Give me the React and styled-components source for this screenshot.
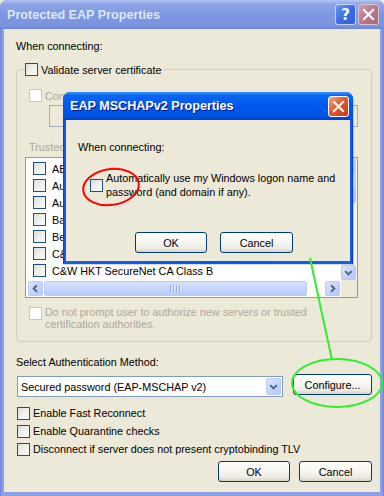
import React from 'react';
import styled, { createGlobalStyle } from 'styled-components';

const GlobalStyle = createGlobalStyle`
  html, body { margin: 0; padding: 0; background: #ece9d8; }
  body { font-family: "Liberation Sans", Arial, sans-serif; font-size: 10.8px; color: #000; }
`;

const Desktop = styled.div`
  position: relative;
  width: 384px;
  height: 496px;
  overflow: hidden;
`;

const Window = styled.div`
  box-sizing: border-box;
  display: flex;
  flex-direction: column;
  width: ${p => p.w}px;
  height: ${p => p.h}px;
  border-radius: 7px 7px 0 0;
  background: ${p => p.active ? 'linear-gradient(90deg, #0831d9, #1660ef 2px, #0058ee 50%, #1660ef calc(100% - 2px), #0831d9)' : 'linear-gradient(90deg, #6b7fd3, #8c9fe4 2px, #8c9fe4 calc(100% - 2px), #6b7fd3)'};
  ${p => p.floating && `
    position: absolute;
    left: ${p.x}px;
    top: ${p.y}px;
    z-index: 5;
    box-shadow: 1px 1px 0 rgba(0,0,0,0.15);
  `}
`;

const TitleBar = styled.div`
  flex: none;
  display: flex;
  align-items: center;
  height: ${p => p.h}px;
  padding: 0 ${p => p.pr}px 0 7px;
  border-radius: 7px 7px 0 0;
  background: ${p => p.active
    ? 'linear-gradient(180deg, #3d95ff 0%, #0a66f2 12%, #0058ee 45%, #0054e3 85%, #0042c9 100%)'
    : 'linear-gradient(180deg, #b4c6f4 0%, #8ea5e8 14%, #7d97e2 50%, #7b94df 90%, #6b83d4 100%)'};
`;

const TitleText = styled.span`
  flex: 1;
  font-family: "Liberation Sans", Arial, sans-serif;
  font-weight: bold;
  font-size: 12.6px;
  color: ${p => p.active ? '#ffffff' : '#dde7fa'};
  text-shadow: ${p => p.active ? '1px 1px 0 #0a1883' : 'none'};
  white-space: nowrap;
`;

const Caps = styled.div`
  display: flex;
  gap: 2px;
`;

const CapButton = styled.div`
  box-sizing: border-box;
  width: 21px;
  height: 21px;
  border-radius: 3px;
  border: 1px solid ${p => p.kind === 'help' ? '#c6d4f7' : p.active ? '#ffffff' : '#d9c3d1'};
  display: flex;
  align-items: center;
  justify-content: center;
  color: #fff;
  font-weight: bold;
  font-size: 15px;
  font-family: "DejaVu Sans", sans-serif;
  background: ${p => p.kind === 'help'
    ? 'linear-gradient(135deg, #6e97f2, #3b6ee6 50%, #2f5fd6)'
    : p.active
      ? 'linear-gradient(135deg, #f3a58b, #e15a32 45%, #c7381a)'
      : 'linear-gradient(135deg, #d09cae, #b9788d 50%, #a86679)'};
`;

const Body = styled.div`
  flex: 1;
  display: flex;
  flex-direction: column;
  margin: 0 ${p => p.br}px ${p => p.bb}px ${p => p.bl}px;
  padding: ${p => p.pad};
  background: #ece9d8;
`;

const Caption = styled.div`
  line-height: 13px;
  height: 13px;
  white-space: nowrap;
  color: ${p => p.disabled ? '#aca899' : '#000'};
  margin-top: ${p => p.mt || 0}px;
`;

const CheckRow = styled.div`
  display: flex;
  align-items: center;
  gap: 3px;
  height: ${p => p.h || 13}px;
  margin-top: ${p => p.mt || 0}px;
  margin-left: ${p => p.ml || 0}px;
  white-space: nowrap;
  color: ${p => p.disabled ? '#aca899' : '#000'};
`;

const WrapRow = styled.div`
  display: flex;
  align-items: flex-start;
  gap: 3px;
  margin-top: ${p => p.mt || 0}px;
  margin-left: ${p => p.ml || 0}px;
  color: ${p => p.disabled ? '#aca899' : '#000'};
  & > span:last-child {
    line-height: ${p => p.lh}px;
    white-space: nowrap;
  }
`;

const Box = styled.span`
  box-sizing: border-box;
  flex: none;
  width: 13px;
  height: 13px;
  margin-top: ${p => p.mt || 0}px;
  border: 1px solid ${p => p.disabled ? '#cac8bb' : '#1c5180'};
  background: ${p => p.disabled ? '#ffffff' : 'linear-gradient(135deg, #dcdcd7 0%, #ededea 45%, #fbfbfa 100%)'};
`;

const GroupBox = styled.div`
  position: relative;
  display: flex;
  flex-direction: column;
  margin-top: 16px;
  padding: 19px 13px 11px 12px;
  border: 1px solid #d0d0bf;
  border-radius: 4px;
`;

const Legend = styled.div`
  position: absolute;
  top: -8px;
  left: 8px;
  padding-right: 2px;
  background: #ece9d8;
`;

const ServerField = styled.div`
  box-sizing: border-box;
  height: 22px;
  margin: 3px 0 0 20px;
  border: 1px solid #a7aeb9;
  background: #ece9d8;
`;

const ListBox = styled.div`
  box-sizing: border-box;
  display: grid;
  grid-template-columns: 1fr 16px;
  grid-template-rows: 1fr 17px;
  height: 141px;
  margin: 3px 0 0 -4px;
  border: 1px solid #7f9db9;
  background: #ffffff;
`;

const Items = styled.div`
  overflow: hidden;
  padding: 2px 0 0 7px;
`;

const Item = styled.div`
  display: flex;
  align-items: center;
  gap: 6px;
  height: 17px;
  white-space: nowrap;
`;

const VScroll = styled.div`
  display: flex;
  flex-direction: column;
  background: #f4f3ee;
`;

const HScroll = styled.div`
  display: flex;
  align-items: stretch;
  background: #fdfdfa;
  padding: 1px 0;
`;

const Corner = styled.div`
  background: #ece9d8;
`;

const ScrollBtn = styled.div`
  box-sizing: border-box;
  flex: none;
  width: ${p => p.w || 15}px;
  height: ${p => p.h || 15}px;
  margin: ${p => p.m || '0'};
  display: flex;
  align-items: center;
  justify-content: center;
  border: 1px solid #b7cbf5;
  border-radius: 2px;
  background: linear-gradient(135deg, #d9e4fd, #c1d3fb 60%, #b3c8f8);
`;

const Thumb = styled.div`
  box-sizing: border-box;
  display: flex;
  align-items: center;
  justify-content: center;
  gap: 1px;
  width: ${p => p.w}px;
  height: ${p => p.h}px;
  margin: ${p => p.m || '0'};
  border: 1px solid #b7cbf5;
  border-radius: 2px;
  background: linear-gradient(180deg, #d6e2fd, #c3d4fb 60%, #b9cbf8);
`;

const Grip = styled.span`
  width: 1px;
  height: 7px;
  background: #8ca5ec;
  border-right: 1px solid #eef3fe;
`;

const Track = styled.div`
  flex: 1;
`;

const SelectRow = styled.div`
  display: flex;
  align-items: flex-start;
  gap: 10px;
  margin-top: 5px;
  margin-left: 1px;
`;

const Select = styled.div`
  box-sizing: border-box;
  display: flex;
  align-items: center;
  width: 266px;
  height: 21px;
  margin-top: 2px;
  border: 1px solid #7f9db9;
  background: #fff;
`;

const SelectText = styled.span`
  flex: 1;
  padding-left: 3px;
  white-space: nowrap;
`;

const Button = styled.button`
  box-sizing: border-box;
  width: ${p => p.w}px;
  height: 21px;
  padding: 0;
  border: 1px solid #003c74;
  border-radius: 3px;
  background: linear-gradient(180deg, #ffffff 0%, #f7f6f1 45%, #ecebe4 80%, #d8d3c6 100%);
  font-family: "Liberation Sans", Arial, sans-serif;
  font-size: 10.8px;
  color: #000;
`;

const Options = styled.div`
  margin-top: 7px;
  margin-left: 1px;
`;

const ButtonRow = styled.div`
  display: flex;
  gap: ${p => p.gap}px;
  justify-content: ${p => p.end ? 'flex-end' : 'flex-start'};
  margin-top: ${p => p.mt}px;
  margin-left: ${p => p.ml || 0}px;
`;

const Overlay = styled.svg`
  position: absolute;
  left: 0;
  top: 0;
  z-index: 10;
  pointer-events: none;
`;

const XIcon = () => (
  <svg width="13" height="13" viewBox="0 0 13 13">
    <path d="M2 2 L11 11 M11 2 L2 11" stroke="#fff" strokeWidth="2.2" strokeLinecap="square" />
  </svg>
);

const Arrow = ({ dir }) => {
  const d = {
    down: 'M3.5 5.5 L7 9 L10.5 5.5',
    up: 'M3.5 9 L7 5.5 L10.5 9',
    left: 'M8.5 3.5 L5 7 L8.5 10.5',
    right: 'M5.5 3.5 L9 7 L5.5 10.5',
  }[dir];
  return (
    <svg width="13" height="13" viewBox="0 0 14 14">
      <path d={d} stroke="#4d6185" strokeWidth="2" fill="none" />
    </svg>
  );
};

const authorities = [
  'ABA.ECOM Root CA',
  'Autoridad Certificadora de la Asociacion Nacional del Notariado Mexicano',
  'Autoridad Certificadora del Colegio Nacional de Correduria Publica Mexicana',
  'Baltimore EZ by DST',
  'Belgacom E-Trust Primary CA',
  'C&W HKT SecureNet CA Class A',
  'C&W HKT SecureNet CA Class B',
];

const App = () => (
  <Desktop>
    <GlobalStyle />
    <Window w={384} h={496}>
      <TitleBar h={29} pr={5}>
        <TitleText>Protected EAP Properties</TitleText>
        <Caps>
          <CapButton kind="help">?</CapButton>
          <CapButton kind="close"><XIcon /></CapButton>
        </Caps>
      </TitleBar>
      <Body bl={4} br={4} bb={4} pad="11px 8px 0 12px">
        <Caption>When connecting:</Caption>
        <GroupBox>
          <Legend>
            <CheckRow h={15}>
              <Box />
              Validate server certificate
            </CheckRow>
          </Legend>
          <CheckRow disabled>
            <Box disabled />
            Connect to these servers:
          </CheckRow>
          <ServerField />
          <Caption disabled mt={14}>Trusted Root Certification Authorities:</Caption>
          <ListBox>
            <Items>
              {authorities.map(a => (
                <Item key={a}>
                  <Box />
                  {a}
                </Item>
              ))}
            </Items>
            <VScroll>
              <ScrollBtn><Arrow dir="up" /></ScrollBtn>
              <Thumb w={15} h={30} />
              <Track />
              <ScrollBtn><Arrow dir="down" /></ScrollBtn>
            </VScroll>
            <HScroll>
              <ScrollBtn m="0 1px 0 2px"><Arrow dir="left" /></ScrollBtn>
              <Thumb w={263} h={15}>
                <Grip /><Grip /><Grip /><Grip />
              </Thumb>
              <Track />
              <ScrollBtn m="0 1px 0 0"><Arrow dir="right" /></ScrollBtn>
            </HScroll>
            <Corner />
          </ListBox>
          <WrapRow disabled mt={8} lh={12}>
            <Box disabled mt={1} />
            <span>Do not prompt user to authorize new servers or trusted<br />certification authorities.</span>
          </WrapRow>
        </GroupBox>
        <Caption mt={14}>Select Authentication Method:</Caption>
        <SelectRow>
          <Select>
            <SelectText>Secured password (EAP-MSCHAP v2)</SelectText>
            <ScrollBtn w={15} h={17} m="0 1px 0 0"><Arrow dir="down" /></ScrollBtn>
          </Select>
          <Button w={79}>Configure...</Button>
        </SelectRow>
        <Options>
          <CheckRow h={18}><Box />Enable Fast Reconnect</CheckRow>
          <CheckRow h={18}><Box />Enable Quarantine checks</CheckRow>
          <CheckRow h={18}><Box />Disconnect if server does not present cryptobinding TLV</CheckRow>
        </Options>
        <ButtonRow end gap={9} mt={3}>
          <Button w={72}>OK</Button>
          <Button w={73}>Cancel</Button>
        </ButtonRow>
      </Body>
    </Window>

    <Window active floating x={63} y={92} w={290} h={172}>
      <TitleBar active h={28} pr={4}>
        <TitleText active>EAP MSCHAPv2 Properties</TitleText>
        <CapButton kind="close" active><XIcon /></CapButton>
      </TitleBar>
      <Body bl={3} br={3} bb={3} pad="21px 0 0 12px">
        <Caption>When connecting:</Caption>
        <WrapRow mt={17} ml={12} lh={14}>
          <Box mt={8} />
          <span>Automatically use my Windows logon name and<br />password (and domain if any).</span>
        </WrapRow>
        <ButtonRow gap={13} mt={33} ml={57}>
          <Button w={72}>OK</Button>
          <Button w={73}>Cancel</Button>
        </ButtonRow>
      </Body>
    </Window>

    <Overlay width="384" height="496" viewBox="0 0 384 496">
      <ellipse cx="111" cy="187" rx="28" ry="18" transform="rotate(-8 111 187)" fill="none" stroke="#ff0000" strokeWidth="2" />
      <path d="M310 258 L332 360" stroke="#2ef02e" strokeWidth="2" fill="none" />
      <ellipse cx="337" cy="383" rx="45" ry="24" fill="none" stroke="#2ef02e" strokeWidth="2" />
    </Overlay>
  </Desktop>
);

export default App;
